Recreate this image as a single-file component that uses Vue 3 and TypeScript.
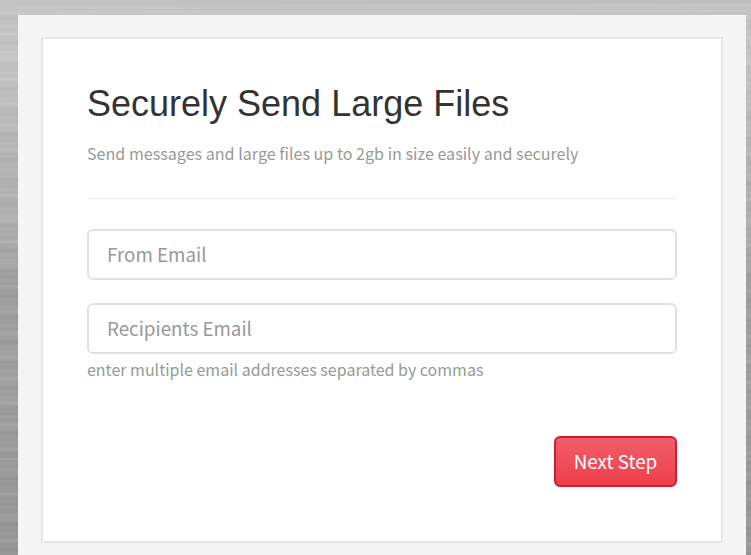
<script setup lang="ts">
import { ref } from 'vue'

const fromEmail = ref<string>('')
const recipients = ref<string>('')
</script>

<template>
  <main class="page">
    <section class="frame">
      <form class="card" @submit.prevent>
        <h1 class="title">Securely Send Large Files</h1>
        <p class="lead">Send messages and large files up to 2gb in size easily and securely</p>
        <hr class="rule" />
        <input v-model="fromEmail" class="field" type="text" placeholder="From Email" />
        <input v-model="recipients" class="field second" type="text" placeholder="Recipients Email" />
        <p class="hint">enter multiple email addresses separated by commas</p>
        <button class="next" type="submit">Next Step</button>
      </form>
    </section>
  </main>
</template>

<style>
body {
  margin: 0;
  overflow: hidden;
}
</style>

<style scoped>
.page {
  box-sizing: border-box;
  height: 555px;
  padding: 15px 5px 0 18px;
  overflow: hidden;
  font-family: 'Noto Sans CJK SC', 'Noto Sans', sans-serif;
  background:
    linear-gradient(transparent 457px, rgba(255, 255, 255, 0.16) 459px, transparent 461px),
    repeating-linear-gradient(179.8deg, rgba(255, 255, 255, 0.05) 0, rgba(0, 0, 0, 0.02) 4px, rgba(255, 255, 255, 0.04) 8px, rgba(0, 0, 0, 0.02) 11px, rgba(255, 255, 255, 0.05) 13px),
    repeating-linear-gradient(180.3deg, rgba(0, 0, 0, 0.03) 0, transparent 7px 12px, rgba(255, 255, 255, 0.08) 15px, transparent 19px, rgba(0, 0, 0, 0.03) 23px),
    linear-gradient(#c4c4c4 0, #c5c5c5 60px, #b4b4b4 160px, #aeaeae 230px, #9f9f9f 285px, #a0a0a0 390px, #999 470px, #979797 555px);
}

.frame {
  box-sizing: border-box;
  height: 560px;
  padding: 22px 23px 0;
  background: #f5f5f5;
}

.card {
  box-sizing: border-box;
  display: flex;
  flex-direction: column;
  height: 506px;
  padding: 45px 44px 0;
  border: 2px solid #e7e7e7;
  background: #fff;
}

.title {
  margin: 0;
  font: 400 36px/40px 'Liberation Sans', Arial, sans-serif;
  color: #333;
  white-space: nowrap;
}

.lead,
.hint {
  margin: 0;
  font-size: 16.1px;
  line-height: 24px;
  color: #999;
  white-space: nowrap;
}

.lead {
  margin-top: 17px;
}

.rule {
  width: 100%;
  height: 1px;
  margin: 33px 0 30px;
  border: 0;
  background: #eee;
}

.field {
  box-sizing: border-box;
  width: 100%;
  height: 51px;
  margin: 0;
  padding: 0 18px 2px;
  border: 2px solid #e1e1e1;
  border-radius: 6px;
  outline: 0;
  background: #fff;
  font-family: inherit;
  font-size: 18.8px;
  color: #555;
}

.field::placeholder {
  color: #999;
  opacity: 1;
}

.second {
  margin-top: 23px;
}

.hint {
  margin-top: 3px;
  font-size: 16px;
}

.next {
  box-sizing: border-box;
  align-self: flex-end;
  width: 123px;
  height: 51px;
  margin: 55px 0 0;
  padding: 0 0 2px;
  border: 2px solid #cd1f32;
  border-radius: 6px;
  background: linear-gradient(#f05f69, #ef3e4a);
  font-family: inherit;
  font-size: 18.8px;
  color: #fff;
  white-space: nowrap;
}
</style>
